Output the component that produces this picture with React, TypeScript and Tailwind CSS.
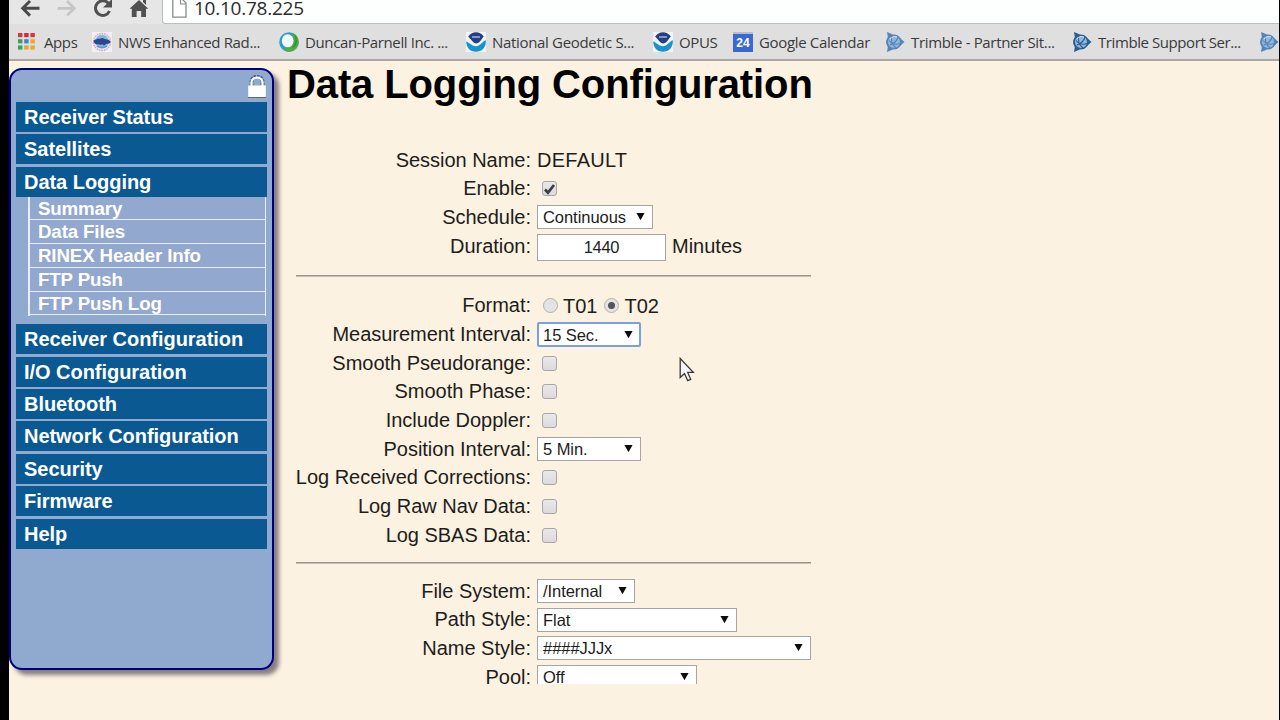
import type { ReactNode } from "react"
import clsx from "clsx"

const SANS = "font-['Liberation_Sans',Arial,sans-serif]"
const UI = "font-['Open_Sans','Noto_Sans',sans-serif]"

/* ---------- favicons ---------- */

function AppsIcon() {
  const colors = ["#d8343f", "#c9303c", "#d8343f", "#36a35c", "#3f7fe0", "#e9a92c", "#36a35c", "#e3a72f", "#e9a92c"]
  return (
    <svg width="17" height="17" viewBox="0 0 17 17">
      {colors.map((c, i) => (
        <rect key={i} x={(i % 3) * 6.2} y={Math.floor(i / 3) * 6.2} width="4.4" height="4.2" fill={c} />
      ))}
    </svg>
  )
}

function NwsIcon() {
  return (
    <svg width="20" height="20" viewBox="0 0 20 20">
      <rect width="20" height="20" fill="#f6edf3" />
      <circle cx="10" cy="10" r="8.6" fill="#d9e4f2" stroke="#dc9cb0" strokeWidth="1.2" strokeDasharray="1.5 1" />
      <circle cx="10" cy="9.6" r="6.8" fill="#8db6dd" />
      <path d="M1.500 9c1-2 3-1 4.500-2.500 1.500 1 2.500-.5 4-.5 2 0 2.500 1.500 4 1.200 2 0 4 1 4.500 2.600-.5 2-2.500 2.200-4.500 2-1 1.800-2.500 2.200-3.500.4C8 13.500 6.500 12 5 12.200 3 12 1.800 11 1.500 9z" fill="#284890" />
      <path d="M5 14c2.500 2 7.500 2 10 0" stroke="#5f95cd" strokeWidth="1.600" fill="none" />
    </svg>
  )
}

function DuncanIcon() {
  return (
    <svg width="20" height="20" viewBox="0 0 20 20">
      <circle cx="10" cy="10" r="9.800" fill="#2c9fc4" />
      <path d="M13 .7A9.800 9.800 0 0 1 8 19.600C5.500 19 4.500 17.600 4 16.500c5 .5 9-2 10-6 .8-4-.2-7-1-9.800z" fill="#4fae3c" />
      <path d="M14 1.200c4 4.500 3 12-2.500 15.500 6-1.200 8-7 5.500-12.200z" fill="#33903c" />
      <ellipse cx="8.700" cy="8.800" rx="5.900" ry="6.500" fill="#f3fafb" />
    </svg>
  )
}

function NoaaIcon() {
  return (
    <svg width="20" height="20" viewBox="0 0 20 20">
      <rect width="20" height="20" fill="#eef6fb" />
      <path d="M2.200 4.500C4.500 1.300 7 .2 10 .2s5.500 1.100 7.800 4.300C16 6 14 11 10.500 11.500 7 11.500 4.500 6.500 2.200 4.500z" fill="#263f80" />
      <path d="M.2 9.500C3 10 5.500 14 10 14.200c4.500-.2 6.500-5 9.800-5.900C20.400 15 16 19.800 10 19.800S.5 16 .2 9.500z" fill="#1c92cc" />
      <path d="M6 5h8" stroke="#8496c6" strokeWidth="2" />
    </svg>
  )
}

function CalendarIcon() {
  return (
    <div className="relative h-5 w-5 overflow-hidden">
      <div className="h-[2px] bg-[#b9bcc6]" />
      <div className={clsx("flex h-[18px] items-center justify-center bg-[#3a68d2] text-[12px] font-bold text-white", SANS)}>
        24
      </div>
    </div>
  )
}

function TrimbleIcon({ dark }: { dark?: boolean }) {
  const c = dark ? "#2c5f8f" : "#5585b8"
  return (
    <svg width="20" height="20" viewBox="0 0 20 20">
      <path d="M2 0l6 2.500C3.500 5 3.500 15 8 17.500L2 20l.8-5C.6 12 .6 8 2.800 5z" fill={c} />
      <path d="M14.500 5.500l5 4.500-5 4.500z" fill={c} />
      <circle cx="9" cy="10" r="6.800" fill="#8fb7dc" stroke={c} strokeWidth="1.500" />
      <path d="M4 8.500c3 3.500 7 4.500 11 3M7 4c-1.500 4 0 9 4 12M5 13c3-1 7-4 8-8" stroke={c} strokeWidth="1.100" fill="none" />
      <path d="M5 7c2-2.500 5-3 7-2" stroke="#d5e6f4" strokeWidth="1" fill="none" />
    </svg>
  )
}

/* ---------- browser chrome ---------- */

type Bookmark = { label: string; width: string; text: string; icon: ReactNode }

const bookmarks: Bookmark[] = [
  { label: "Apps", width: "w-[74px] gap-[9px]", text: "tracking-[-0.4px]", icon: <AppsIcon /> },
  { label: "NWS Enhanced Rad...", width: "w-[187px] gap-[6px]", text: "tracking-[-0.35px]", icon: <NwsIcon /> },
  { label: "Duncan-Parnell Inc. ...", width: "w-[187px] gap-[6px]", text: "tracking-[-0.38px]", icon: <DuncanIcon /> },
  { label: "National Geodetic S...", width: "w-[187px] gap-[6px]", text: "tracking-[-0.32px]", icon: <NoaaIcon /> },
  { label: "OPUS", width: "w-[80px] gap-[6px]", text: "tracking-[-0.4px]", icon: <NoaaIcon /> },
  { label: "Google Calendar", width: "w-[152px] gap-[6px]", text: "tracking-[-0.34px]", icon: <CalendarIcon /> },
  { label: "Trimble - Partner Sit...", width: "w-[187px] gap-[6px]", text: "tracking-[-0.34px]", icon: <TrimbleIcon /> },
  { label: "Trimble Support Ser...", width: "w-[187px] gap-[6px]", text: "tracking-[-0.42px]", icon: <TrimbleIcon dark /> },
  { label: "", width: "w-[20px]", text: "", icon: <TrimbleIcon /> },
]

function Toolbar() {
  return (
    <div className="flex h-[24px] bg-[#e6e6e6]">
      <svg width="153" height="24" viewBox="9 0 153 24" fill="none" className="shrink-0">
        <path d="M39.500 8.300H23M30 1l-7.300 7.300L30 15.600" stroke="#4a4a4a" strokeWidth="2.900" />
        <path d="M57.500 8.300H74M67 1l7.300 7.300L67 15.600" stroke="#c6c6c6" strokeWidth="2.700" />
        <path d="M108.500 3.500A7.300 7.300 0 1 0 109.500 11" stroke="#505050" strokeWidth="3" />
        <path d="M112 -1v8.500h-9z" fill="#505050" />
        <path d="M129.500 8.800L139 0l9.300 8.800h-2.300V17h-4.800v-6h-4.600v6h-4.800V8.800z" fill="#505050" />
        <path d="M143 0h3v5l-3-3z" fill="#505050" />
      </svg>
      <div className="flex flex-1 items-start rounded-bl-[3px] border-b border-l border-[#bdbdbd] bg-[#fdfefe] pl-[9px]">
        <svg width="15" height="18" viewBox="0 0 15 18" fill="none" className="shrink-0">
          <path d="M.8-2H9l5 5v14.200H.8z" fill="#fff" stroke="#8a8a8a" strokeWidth="1.300" />
          <path d="M8.500-1v5H14" stroke="#8a8a8a" strokeWidth="1.200" />
        </svg>
        <span className={clsx("ml-[7px] text-[19px] leading-[16px] tracking-[-0.25px] text-[#2b2b2b]", UI)}>
          10.10.78.225
        </span>
      </div>
    </div>
  )
}

function BookmarksBar() {
  return (
    <div className="flex h-[37px] items-center overflow-hidden border-b-2 border-[#aaa6a4] bg-[#e0dfe0] pl-[9px]">
      {bookmarks.map((b, i) => (
        <div key={i} className={clsx("flex shrink-0 items-center", b.width)}>
          <span className="shrink-0">{b.icon}</span>
          <span className={clsx("whitespace-nowrap text-[15px] leading-5 text-[#3a3a3a]", UI, b.text)}>{b.label}</span>
        </div>
      ))}
    </div>
  )
}

/* ---------- sidebar ---------- */

function MenuRow({ children }: { children: ReactNode }) {
  return (
    <div className="h-[30px] bg-[#0a5993] pl-[8px] text-[20px] leading-[30px] font-bold tracking-[-0.04px] text-white">
      {children}
    </div>
  )
}

const subItems = ["Summary", "Data Files", "RINEX Header Info", "FTP Push", "FTP Push Log"]
const topItems = ["Receiver Status", "Satellites", "Data Logging"]
const bottomItems = [
  "Receiver Configuration",
  "I/O Configuration",
  "Bluetooth",
  "Network Configuration",
  "Security",
  "Firmware",
  "Help",
]

function Sidebar() {
  return (
    <nav className="mt-[7px] h-[602px] w-[265px] shrink-0 rounded-[13px] border-2 border-[#00007f] bg-[#90a9cf] pl-[5px] pr-[5px] shadow-[5px_5px_4px_#877f80]">
      <div className="flex h-[32px] justify-end pt-[5px]">
        <svg width="20" height="23" viewBox="0 0 20 23" fill="none">
          <path d="M4.500 10.500V7C4.500 0 15.500 0 15.500 7v3.500" stroke="#4c5b78" strokeWidth="4" strokeDasharray="2 1" />
          <path d="M4.500 11V7.500C4.500 1 15.500 1 15.500 7.500V11" stroke="#fff" strokeWidth="2.200" />
          <rect x="1.200" y="10.500" width="17.600" height="11.500" fill="#fff" />
          <path d="M1 22.500h18" stroke="#5b6678" />
        </svg>
      </div>
      <div className="flex flex-col gap-[2.400px]">
        {topItems.map((t) => (
          <MenuRow key={t}>{t}</MenuRow>
        ))}
      </div>
      <div className="mr-[1px] ml-[12px] h-[119px] border-r border-l-2 border-[#e6eefb]">
        {subItems.map((t) => (
          <div
            key={t}
            className="h-[23.700px] border-b-[1.500px] border-[#e6eefb] bg-[#92a8ce] pl-[8px] text-[18.700px] leading-[23.700px] font-bold tracking-[-0.130px] text-white"
          >
            {t}
          </div>
        ))}
      </div>
      <div className="mt-[8.400px] flex flex-col gap-[2.400px]">
        {bottomItems.map((t) => (
          <MenuRow key={t}>{t}</MenuRow>
        ))}
      </div>
    </nav>
  )
}

/* ---------- form controls ---------- */

function Select({ value, width, focused }: { value: string; width: string; focused?: boolean }) {
  return (
    <div
      className={clsx(
        "flex items-center justify-between bg-white text-[16.500px] tracking-[-0.050px] text-[#1c1c1c]",
        focused
          ? "h-[25px] rounded-[2px] border-2 border-[#7b9fe0] pr-[6px] pl-[4px]"
          : "h-[24px] border border-[#a8a4a2] pr-[7px] pl-[5px]",
        width,
      )}
    >
      <span className="leading-[22px]">{value}</span>
      <svg width="9" height="9" viewBox="0 0 10 9" className="mb-[1px]">
        <path d="M.5 .5h9L5 8.700z" fill="#0c0c0c" />
      </svg>
    </div>
  )
}

function Checkbox({ checked }: { checked?: boolean }) {
  return (
    <span className="ml-[5px] mt-[1px] flex h-[15px] w-[15px] items-center justify-center rounded-[3px] border border-[#a9a6a8] bg-linear-to-b from-[#ebe8ea] to-[#dcdadd]">
      {checked && (
        <svg width="13" height="12" viewBox="0 0 13 12" fill="none">
          <path d="M2 6.500l3 3.200L11 2" stroke="#3d3d3f" strokeWidth="2.700" />
        </svg>
      )}
    </span>
  )
}

function Radio({ checked }: { checked?: boolean }) {
  return (
    <span className="flex h-[15px] w-[15px] items-center justify-center rounded-full border border-[#b3b0b0] bg-[#e4e2e3]">
      {checked && <span className="h-[7px] w-[7px] rounded-full bg-[#565354]" />}
    </span>
  )
}

function Row({ label, height = "h-[28.700px]", children }: { label: string; height?: string; children: ReactNode }) {
  return (
    <div className={clsx("flex shrink-0 items-center", height)}>
      <div className="w-[244px] shrink-0 text-right tracking-[-0.020px] whitespace-nowrap">{label}</div>
      <div className="ml-[6px] flex items-center">{children}</div>
    </div>
  )
}

function Divider() {
  return <div className="ml-[9px] h-[2px] w-[515px] shrink-0 border-t border-b border-t-[#9d968e] border-b-[#c9c0b4]" />
}

function ConfigForm() {
  return (
    <main className="ml-[13px] flex h-[623px] w-[600px] flex-col overflow-hidden text-[20px] leading-[24px] text-[#1d1d1b]">
      <h1 className="text-[40px] leading-[46px] font-bold tracking-[-0.120px] text-black">Data Logging Configuration</h1>

      <div className="mt-[39px] mb-[14px]">
        <Row label="Session Name:" height="h-[28px]">
          <span className="tracking-[0.250px]">DEFAULT</span>
        </Row>
        <Row label="Enable:" height="h-[28px]">
          <Checkbox checked />
        </Row>
        <Row label="Schedule:" height="h-[29px]">
          <div className="mt-px">
            <Select value="Continuous" width="w-[116px]" />
          </div>
        </Row>
        <Row label="Duration:" height="h-[30px]">
          <div className="mt-[2px] flex h-[27px] w-[129px] items-center justify-center border border-[#a8a4a2] bg-white text-[16.500px] tracking-[-0.300px] text-[#1c1c1c]">
            1440
          </div>
          <span className="ml-[6px]">Minutes</span>
        </Row>
      </div>
      <Divider />

      <div className="mt-[14px] mb-[13px]">
        <Row label="Format:">
          <span className="ml-[6px]">
            <Radio />
          </span>
          <span className="mt-[1px] ml-[5px]">T01</span>
          <span className="ml-[7px]">
            <Radio checked />
          </span>
          <span className="mt-[1px] ml-[5px]">T02</span>
        </Row>
        <Row label="Measurement Interval:">
          <div className="mt-px">
            <Select value="15 Sec." width="w-[104px]" focused />
          </div>
        </Row>
        <Row label="Smooth Pseudorange:">
          <Checkbox />
        </Row>
        <Row label="Smooth Phase:">
          <Checkbox />
        </Row>
        <Row label="Include Doppler:">
          <Checkbox />
        </Row>
        <Row label="Position Interval:">
          <div className="mt-px">
            <Select value="5 Min." width="w-[104px]" />
          </div>
        </Row>
        <Row label="Log Received Corrections:">
          <Checkbox />
        </Row>
        <Row label="Log Raw Nav Data:">
          <Checkbox />
        </Row>
        <Row label="Log SBAS Data:">
          <Checkbox />
        </Row>
      </div>
      <Divider />

      <div className="mt-[12px]">
        <Row label="File System:">
          <div className="mt-px">
            <Select value="/Internal" width="w-[98px]" />
          </div>
        </Row>
        <Row label="Path Style:">
          <div className="mt-px">
            <Select value="Flat" width="w-[200px]" />
          </div>
        </Row>
        <Row label="Name Style:">
          <div className="mt-px">
            <Select value="####JJJx" width="w-[274px]" />
          </div>
        </Row>
        <Row label="Pool:">
          <div className="mt-px">
            <Select value="Off" width="w-[160px]" />
          </div>
        </Row>
      </div>
    </main>
  )
}

function Cursor() {
  return (
    <svg width="16" height="26" viewBox="0 0 16 26" className="absolute top-[357px] left-[670px]">
      <path d="M1.200 1.500V20.500L5.500 16.600L8.700 23.600L11.700 22.300L8.700 15.400H14.300Z" fill="#f8f6fa" stroke="#3a3638" strokeWidth="1.300" />
    </svg>
  )
}

export default function App() {
  return (
    <div className={clsx("relative h-[720px] w-[1280px] overflow-hidden border-r border-l-9 border-black bg-[#fcf2e1]", SANS)}>
      <Toolbar />
      <BookmarksBar />
      <div className="flex">
        <Sidebar />
        <ConfigForm />
      </div>
      <Cursor />
    </div>
  )
}
